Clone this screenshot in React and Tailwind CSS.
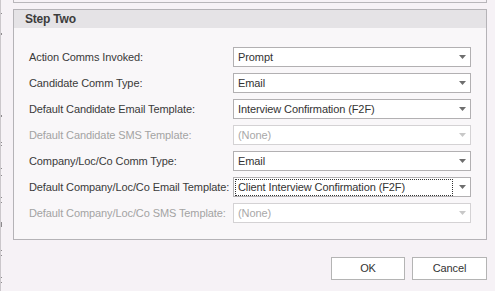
import React from "react";

const rows = [
  { label: "Action Comms Invoked:", value: "Prompt" },
  { label: "Candidate Comm Type:", value: "Email" },
  { label: "Default Candidate Email Template:", value: "Interview Confirmation (F2F)" },
  { label: "Default Candidate SMS Template:", value: "(None)", disabled: true },
  { label: "Company/Loc/Co Comm Type:", value: "Email" },
  { label: "Default Company/Loc/Co Email Template:", value: "Client Interview Confirmation (F2F)", focused: true },
  { label: "Default Company/Loc/Co SMS Template:", value: "(None)", disabled: true },
];

function Arrow({ disabled }) {
  return (
    <svg width="7" height="4" viewBox="0 0 7 4" className="shrink-0">
      <path d="M0 0H7L3.5 4Z" fill={disabled ? "#c8c8c8" : "#6e6e6e"} />
    </svg>
  );
}

function Row({ label, value, disabled, focused }) {
  return (
    <div className="flex h-[20px] items-center">
      <div className={"flex-1 whitespace-nowrap " + (disabled ? "text-[#a3a3a3]" : "text-[#3a3a3a]")}>{label}</div>
      <div
        className={
          "flex h-[20px] w-[238px] items-center border bg-white pr-[4px] " +
          (disabled ? "border-[#d4d2d4] text-[#a8a8a8]" : "border-[#b2b0b2] text-[#333333]")
        }
      >
        <div className="flex flex-1 items-center pl-[1px]">
          <div
            className={
              "flex h-[17px] items-center whitespace-nowrap px-[2px] " +
              (focused ? "w-[218px] border border-dotted border-[#333333]" : "border border-transparent")
            }
          >
            {value}
          </div>
        </div>
        <Arrow disabled={disabled} />
      </div>
    </div>
  );
}

function Tick({ cls }) {
  return <div className={"w-[1px] bg-[#8e8b8e] " + cls} />;
}

export default function App() {
  return (
    <div className="flex h-[291px] w-[495px] bg-[#f6f2f6] text-[11px] leading-none tracking-[-0.1px]" style={{ fontFamily: '"Liberation Sans", Arial, sans-serif' }}>
      <div className="flex w-[2px] flex-col border-l border-[#cbc7cb]">
        <Tick cls="mt-[13px] h-[1px]" />
        <Tick cls="mt-[19px] h-[2px]" />
        <Tick cls="mt-[80px] h-[2px]" />
        <Tick cls="mt-[25px] h-[1px]" />
        <Tick cls="mt-[2px] h-[1px]" />
        <Tick cls="mt-[22px] h-[1px]" />
        <Tick cls="mt-[6px] h-[1px]" />
        <Tick cls="mt-[21px] h-[1px]" />
        <Tick cls="mt-[4px] h-[1px]" />
        <Tick cls="mt-[19px] h-[5px]" />
        <Tick cls="mt-[23px] h-[1px]" />
        <Tick cls="mt-[4px] h-[1px]" />
        <Tick cls="mt-[21px] h-[1px]" />
        <Tick cls="mt-[4px] h-[1px]" />
      </div>
      <div className="flex flex-col pl-[11px]">
        <div className="h-[3px] w-[474px] border-x border-b border-[#b8b6ba]" />
        <div className="mt-[6px] flex h-[231px] w-[474px] flex-col border border-[#b5b3b7] bg-[#f9f7f9]">
          <div className="flex h-[18px] items-center bg-[#e5e3e6] pl-[11px] text-[12px] font-bold tracking-[-0.2px] text-[#3c3c3c]">
            Step Two
          </div>
          <div className="flex flex-col gap-[6px] px-[15px] pt-[19px]">
            {rows.map((r) => (
              <Row key={r.label} {...r} />
            ))}
          </div>
        </div>
        <div className="mt-[17px] flex w-[474px] justify-end gap-[7px]">
          <div className="flex h-[23px] w-[74px] items-center justify-center border border-[#b4b4b4] bg-white text-[#333333]">OK</div>
          <div className="flex h-[23px] w-[75px] items-center justify-center border border-[#b4b4b4] bg-white text-[#333333]">Cancel</div>
        </div>
      </div>
    </div>
  );
}
